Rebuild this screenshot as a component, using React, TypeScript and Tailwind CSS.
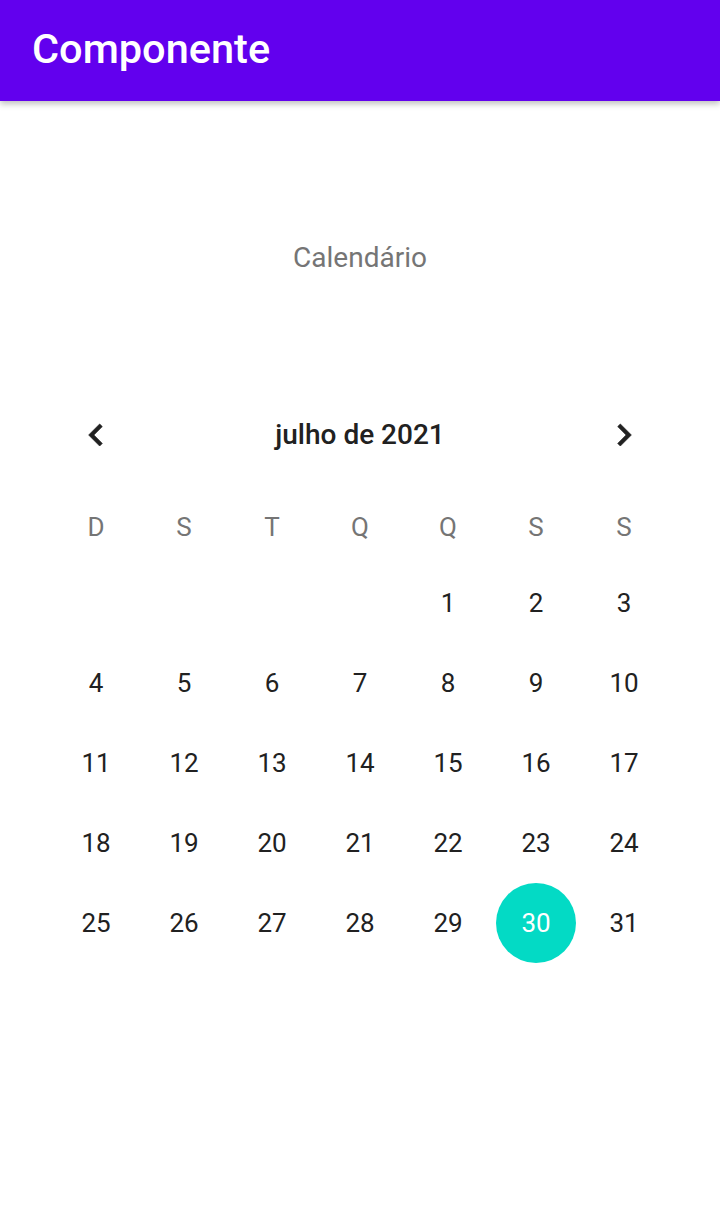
import React from "react";

const weekDays = ["D", "S", "T", "Q", "Q", "S", "S"];

const buildDays = () => {
  const cells: (number | null)[] = [null, null, null, null];
  for (let d = 1; d <= 31; d++) cells.push(d);
  return cells;
};

const ChevronLeft = () => (
  <svg width="44" height="44" viewBox="0 0 24 24" fill="#212121" stroke="#212121" strokeWidth="0.4">
    <path d="M15.41 7.41L14 6l-6 6 6 6 1.41-1.41L10.83 12z" />
  </svg>
);

const ChevronRight = () => (
  <svg width="44" height="44" viewBox="0 0 24 24" fill="#212121" stroke="#212121" strokeWidth="0.4">
    <path d="M10 6L8.59 7.41 13.17 12l-4.58 4.59L10 18l6-6z" />
  </svg>
);

export default function App() {
  const days = buildDays();
  const selected = 30;

  return (
    <div className="w-[720px] h-[1221px] bg-white flex flex-col" style={{ fontFamily: "Roboto, 'Noto Sans', sans-serif" }}>
      <div className="h-[101px] bg-[#6200ee] flex items-center px-8 pb-[4px] shadow-[0_3px_6px_rgba(0,0,0,0.25)] relative z-10">
        <h1 className="text-white text-[41.5px] font-medium leading-none">Componente</h1>
      </div>

      <div className="mt-[137px] h-[40px] flex items-center justify-center">
        <span className="text-[28px] text-[#757575] leading-none">Calendário</span>
      </div>

      <div className="mt-[117px] px-[52px]">
        <div className="h-[80px] flex items-center justify-between">
          <div className="w-[88px] flex justify-center"><ChevronLeft /></div>
          <span className="text-[28px] font-medium text-[#212121]">julho de 2021</span>
          <div className="w-[88px] flex justify-center"><ChevronRight /></div>
        </div>

        <div className="mt-[16px] grid grid-cols-7 h-[72px] items-center">
          {weekDays.map((d, i) => (
            <div key={i} className="text-center text-[26px] text-[#757575]">{d}</div>
          ))}
        </div>

        <div className="grid grid-cols-7">
          {days.map((d, i) => (
            <div key={i} className="h-[80px] flex items-center justify-center">
              {d !== null && (
                d === selected ? (
                  <div className="w-[80px] h-[80px] rounded-full bg-[#03dac5] flex items-center justify-center text-white text-[26px]">{d}</div>
                ) : (
                  <span className="text-[26px] text-[#212121]">{d}</span>
                )
              )}
            </div>
          ))}
        </div>
      </div>
    </div>
  );
}
